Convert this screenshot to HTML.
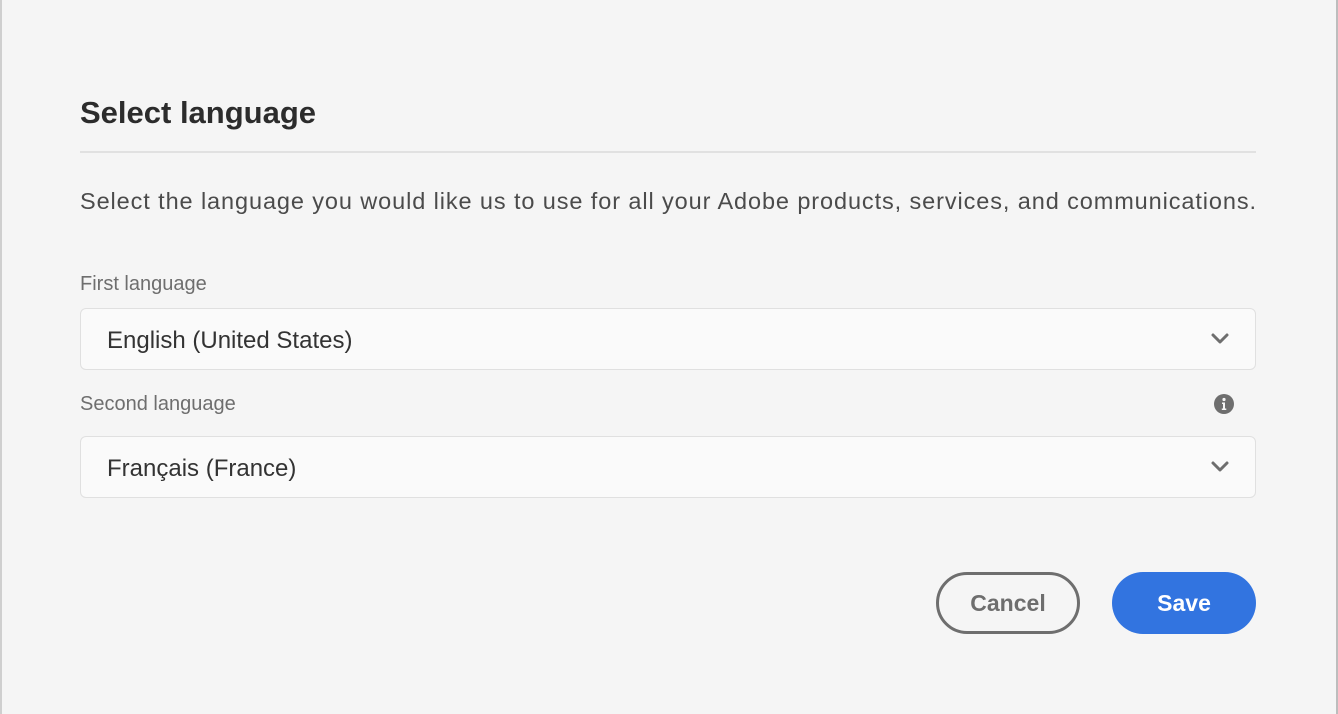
<!DOCTYPE html>
<html><head><style>
body{margin:0;width:1338px;height:714px;background:#f5f5f5;font-family:"Liberation Sans",sans-serif;position:relative;overflow:hidden}
.a{position:absolute}
.lb{left:80px;font-size:20px;color:#6e6e6e;white-space:nowrap}
.f{left:80px;width:1174px;height:60px;border:1px solid #e0e0e0;border-radius:6px;background:#fafafa}
.f span{position:absolute;left:26px;top:18px;font-size:24px;color:#333}
.f svg{position:absolute;right:25px;top:22px}
.b{top:572px;height:62px;border-radius:32px;box-sizing:border-box;font-size:23px;font-weight:bold;display:flex;align-items:center;justify-content:center}
</style></head><body>
<div class="a" style="left:0;top:0;width:2px;height:714px;background:#cfcfcf"></div>
<div class="a" style="right:0;top:0;width:2px;height:714px;background:#bdbdbd"></div>
<div class="a" style="left:80px;top:95px;font-size:31px;font-weight:bold;color:#2c2c2c">Select language</div>
<div class="a" style="left:80px;top:151px;width:1176px;height:2px;background:#e1e1e1"></div>
<div class="a" style="left:80px;top:188px;font-size:23.5px;letter-spacing:0.9px;color:#4b4b4b;white-space:nowrap">Select the language you would like us to use for all your Adobe products, services, and communications.</div>
<div class="a lb" style="top:273px">First language</div>
<div class="a f" style="top:308px"><span>English (United States)</span><svg width="20" height="14" viewBox="0 0 20 14"><path d="M3 4l7 7 7-7" fill="none" stroke="#6e6e6e" stroke-width="3" stroke-linecap="round" stroke-linejoin="round"/></svg></div>
<div class="a lb" style="top:393px">Second language</div>
<svg class="a" style="left:1214px;top:394px" width="20" height="20" viewBox="0 0 20 20"><circle cx="10" cy="10" r="10" fill="#6e6e6e"/><circle cx="10" cy="5.5" r="1.6" fill="#f5f5f5"/><path d="M8 8.5h3v6h1.3v1.5H7.8v-1.5H9V10H8z" fill="#f5f5f5"/></svg>
<div class="a f" style="top:436px"><span>Français (France)</span><svg width="20" height="14" viewBox="0 0 20 14"><path d="M3 4l7 7 7-7" fill="none" stroke="#6e6e6e" stroke-width="3" stroke-linecap="round" stroke-linejoin="round"/></svg></div>
<div class="a b" style="left:936px;width:144px;border:3px solid #6e6e6e;color:#6e6e6e">Cancel</div>
<div class="a b" style="left:1112px;width:144px;background:#3274e0;color:#fff">Save</div>
</body></html>
